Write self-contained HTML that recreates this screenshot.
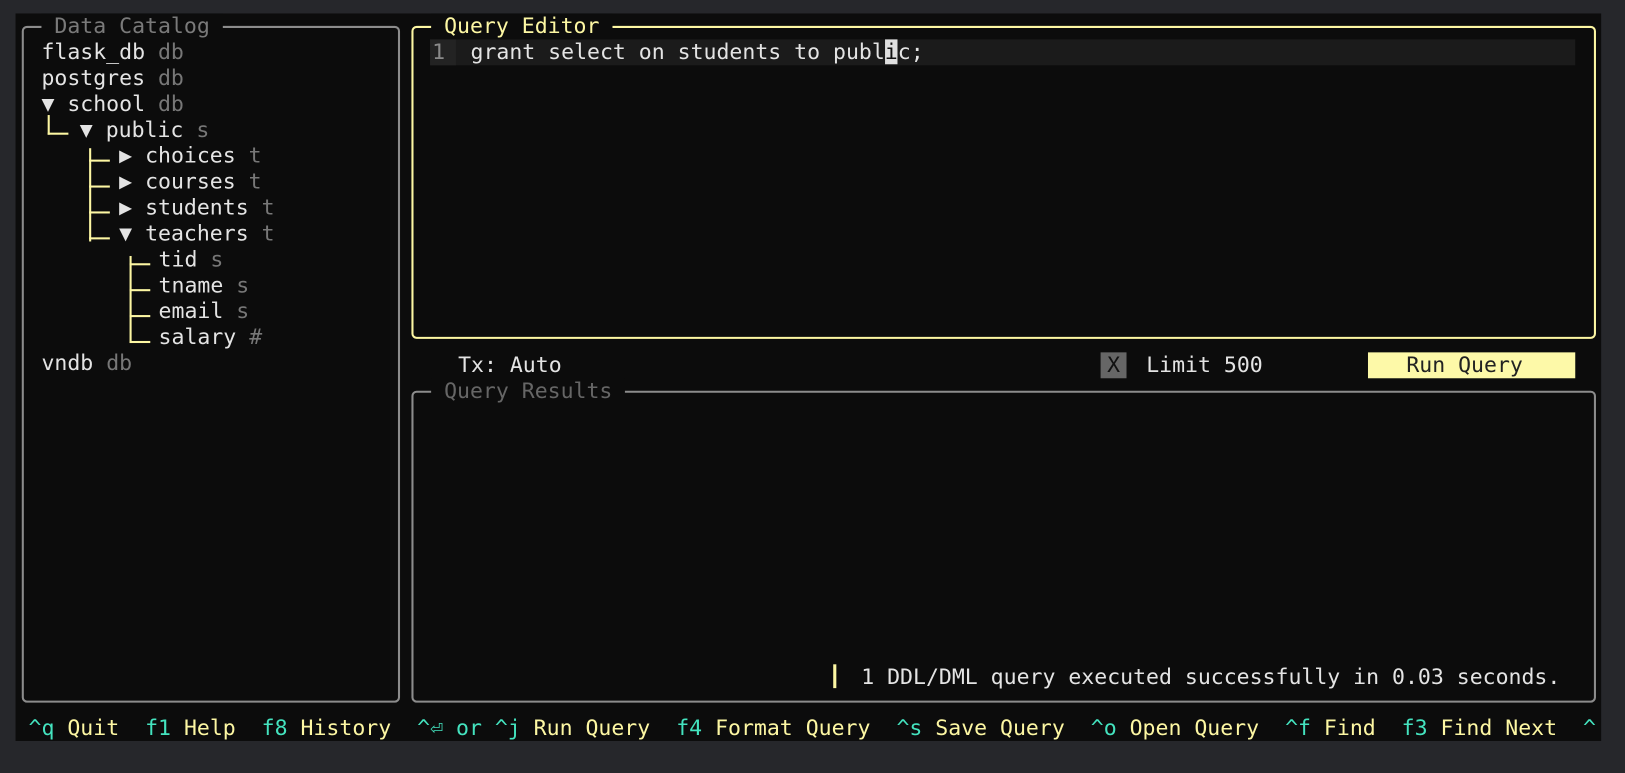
<!DOCTYPE html>
<html><head><meta charset="utf-8"><style>
*{margin:0;padding:0;box-sizing:border-box}
body{width:1625px;height:773px;background:#26272b;position:relative;overflow:hidden;font-family:"DejaVu Sans Mono","Liberation Mono",monospace;font-size:20.76px;}
#wrap{position:absolute;left:0;top:0;width:1568px;height:746px;transform:scale(1.03635);transform-origin:0 0}
#term{position:absolute;left:14.5px;top:12.5px;width:1530px;height:702.5px;background:#0c0c0c}
.t{position:absolute;line-height:25px;height:25px;white-space:pre;color:#e4e4e4}
.g{color:#777}
.box{position:absolute;border:2px solid #8c8c8c;border-radius:5px}
.y{color:#fdf7a3}
.k{color:#44e3bf}
.ln{position:absolute;background:#fdf7a3}
</style></head><body>
<div id="wrap">
<div id="term"></div>

<div class="box" style="left:21px;top:25px;width:365px;height:653px"></div>
<div class="t g" style="left:40px;top:13px;background:#0c0c0c;color:#7a7a7a"> Data Catalog </div>
<div class="t" style="left:40px;top:38px">flask_db <span class="g">db</span></div>
<div class="t" style="left:40px;top:63px">postgres <span class="g">db</span></div>
<div class="t" style="left:40px;top:88px">▼ school <span class="g">db</span></div>
<div class="t" style="left:77px;top:113px">▼ public <span class="g">s</span></div>
<div class="t" style="left:115px;top:138px">▶ choices <span class="g">t</span></div>
<div class="t" style="left:115px;top:163px">▶ courses <span class="g">t</span></div>
<div class="t" style="left:115px;top:188px">▶ students <span class="g">t</span></div>
<div class="t" style="left:115px;top:213px">▼ teachers <span class="g">t</span></div>
<div class="t" style="left:153px;top:238px">tid <span class="g">s</span></div>
<div class="t" style="left:153px;top:263px">tname <span class="g">s</span></div>
<div class="t" style="left:153px;top:288px">email <span class="g">s</span></div>
<div class="t" style="left:153px;top:313px">salary <span class="g">#</span></div>
<div class="t" style="left:40px;top:338px">vndb <span class="g">db</span></div>
<div class="ln" style="left:46px;top:111px;width:2px;height:19px"></div>
<div class="ln" style="left:46px;top:128px;width:20px;height:2px"></div>
<div class="ln" style="left:86px;top:143px;width:2px;height:90px"></div>
<div class="ln" style="left:86px;top:154px;width:20px;height:2px"></div>
<div class="ln" style="left:86px;top:179px;width:20px;height:2px"></div>
<div class="ln" style="left:86px;top:204px;width:20px;height:2px"></div>
<div class="ln" style="left:86px;top:229px;width:20px;height:2px"></div>
<div class="ln" style="left:125px;top:247px;width:2px;height:84px"></div>
<div class="ln" style="left:125px;top:254px;width:20px;height:2px"></div>
<div class="ln" style="left:125px;top:279px;width:20px;height:2px"></div>
<div class="ln" style="left:125px;top:304px;width:20px;height:2px"></div>
<div class="ln" style="left:125px;top:329px;width:20px;height:2px"></div>

<div class="box" style="left:397px;top:25px;width:1143px;height:302px;border-color:#fdf7a3"></div>
<div class="t y" style="left:416px;top:13px;background:#0c0c0c"> Query Editor </div>
<div style="position:absolute;left:415px;top:38px;width:1105px;height:25px;background:#1b1b1b"></div>
<div style="position:absolute;left:415px;top:38px;width:25px;height:25px;background:#232323"></div>
<div class="t g" style="left:417px;top:38px;color:#8a8a8a">1</div>
<div class="t" style="left:454px;top:38px">grant select on students to publ<span style="background:#e0e0e0;color:#111">i</span>c;</div>

<div class="t" style="left:442px;top:340px">Tx: Auto</div>
<div class="t" style="left:1062px;top:340px;width:25px;background:#666;color:#111;text-align:center">X</div>
<div class="t" style="left:1106px;top:340px">Limit 500</div>
<div class="t" style="left:1320px;top:340px;width:200px;background:#fdf9a8;color:#222;padding-left:37px">Run Query</div>

<div class="box" style="left:397px;top:377px;width:1143px;height:301px"></div>
<div class="t" style="left:416px;top:365px;background:#0c0c0c;color:#666"> Query Results </div>
<div class="ln" style="left:804px;top:641px;width:3px;height:23px"></div>
<div class="t" style="left:831px;top:641px">1 DDL/DML query executed successfully in 0.03 seconds.</div>

<div class="t" style="left:27.5px;top:690px"><span class="k">^q</span><span class="y"> Quit</span></div>
<div class="t" style="left:140px;top:690px"><span class="k">f1</span><span class="y"> Help</span></div>
<div class="t" style="left:252.5px;top:690px"><span class="k">f8</span><span class="y"> History</span></div>
<div class="t k" style="left:402.5px;top:690px">^⏎</div>
<div class="t" style="left:440px;top:690px"><span class="k">or ^j</span><span class="y"> Run Query</span></div>
<div class="t" style="left:652.5px;top:690px"><span class="k">f4</span><span class="y"> Format Query</span></div>
<div class="t" style="left:865px;top:690px"><span class="k">^s</span><span class="y"> Save Query</span></div>
<div class="t" style="left:1052.5px;top:690px"><span class="k">^o</span><span class="y"> Open Query</span></div>
<div class="t" style="left:1240px;top:690px"><span class="k">^f</span><span class="y"> Find</span></div>
<div class="t" style="left:1352.5px;top:690px"><span class="k">f3</span><span class="y"> Find Next</span></div>
<div class="t k" style="left:1527.5px;top:690px">^</div>
</div>
</body></html>
